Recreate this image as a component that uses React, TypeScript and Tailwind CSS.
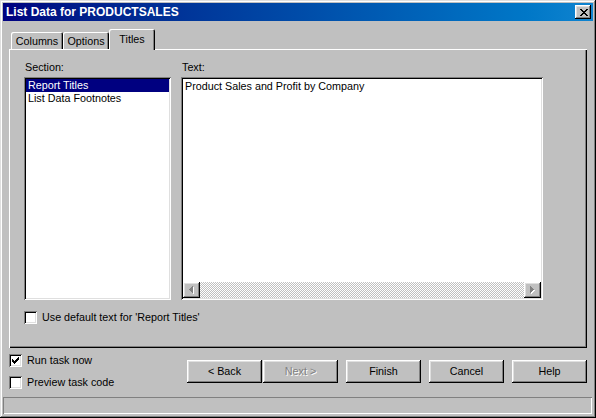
import React from 'react';

const raised =
  'shadow-[inset_-1px_-1px_#000,inset_1px_1px_#fff,inset_-2px_-2px_#808080,inset_2px_2px_#dfdfdf]';
const sunken =
  'shadow-[inset_1px_1px_#808080,inset_-1px_-1px_#fff,inset_2px_2px_#000,inset_-2px_-2px_#dfdfdf]';

const CloseGlyph = () => (
  <svg width="8" height="7" viewBox="0 0 8 7" shapeRendering="crispEdges">
    <path
      d="M0 0h2v1H0zM6 0h2v1H6zM1 1h2v1H1zM5 1h2v1H5zM2 2h4v1H2zM3 3h2v1H3zM2 4h4v1H2zM1 5h2v1H1zM5 5h2v1H5zM0 6h2v1H0zM6 6h2v1H6z"
      fill="#000"
    />
  </svg>
);

const CheckGlyph = () => (
  <svg width="7" height="7" viewBox="0 0 7 7" shapeRendering="crispEdges">
    <path
      d="M6 0h1v1H6zM5 1h2v1H5zM0 2h1v1H0zM4 2h3v1H4zM0 3h2v1H0zM3 3h3v1H3zM0 4h5v1H0zM1 5h3v1H1zM2 6h1v1H2z"
      fill="#000"
    />
  </svg>
);

const Checkbox: React.FC<{ checked?: boolean }> = ({ checked }) => (
  <div className={`w-[13px] h-[13px] bg-white flex items-center justify-center shrink-0 ${sunken}`}>
    {checked && <CheckGlyph />}
  </div>
);

const ScrollButton: React.FC<{ dir: 'left' | 'right' }> = ({ dir }) => (
  <div className={`w-[17px] h-[16px] bg-[#c0c0c0] flex items-center justify-center shrink-0 ${raised}`}>
    <svg width="5" height="8" viewBox="0 0 5 8" shapeRendering="crispEdges">
      {dir === 'left' ? (
        <>
          <path d="M3 0h1v7H3zM2 1h1v5H2zM1 2h1v3H1zM0 3h1v1H0z" fill="#fff" transform="translate(1,1)" />
          <path d="M3 0h1v7H3zM2 1h1v5H2zM1 2h1v3H1zM0 3h1v1H0z" fill="#808080" />
        </>
      ) : (
        <>
          <path d="M0 0h1v7H0zM1 1h1v5H1zM2 2h1v3H2zM3 3h1v1H3z" fill="#fff" transform="translate(1,1)" />
          <path d="M0 0h1v7H0zM1 1h1v5H1zM2 2h1v3H2zM3 3h1v1H3z" fill="#808080" />
        </>
      )}
    </svg>
  </div>
);

const Tab: React.FC<{ label: string; width: string; active?: boolean }> = ({ label, width, active }) => (
  <div
    className={`${width} bg-[#c0c0c0] rounded-t-[2px] flex justify-center shadow-[inset_1px_1px_#fff,inset_-1px_0_#000,inset_-2px_0_#808080] ${
      active ? 'h-[21px] relative top-[1px] z-10 pt-[4px]' : 'h-[17px] pt-[3px]'
    }`}
  >
    <span className="leading-[12px]">{label}</span>
  </div>
);

const Button: React.FC<{ label: string; disabled?: boolean; className?: string }> = ({ label, disabled, className }) => (
  <div className={`w-[75px] h-[23px] bg-[#c0c0c0] flex items-center justify-center ${raised} ${className ?? ''}`}>
    <span className={disabled ? 'text-[#808080] [text-shadow:1px_1px_0_#fff]' : ''}>{label}</span>
  </div>
);

export default function App() {
  return (
    <div className="w-[596px] h-[418px] bg-[#c0c0c0] flex flex-col pt-[3px] px-[3px] pb-[4px] font-['Liberation_Sans',Arial,sans-serif] text-[10.75px] text-black select-none shadow-[inset_-1px_-1px_#000,inset_1px_1px_#dfdfdf,inset_-2px_-2px_#808080,inset_2px_2px_#fff]">
      {/* title bar */}
      <div className="h-[18px] flex items-center justify-between pl-[3px] pr-[2px] bg-gradient-to-r from-[#000080] to-[#1084d0] shrink-0">
        <span className="text-white font-bold text-[12px] leading-[14px]">List Data for PRODUCTSALES</span>
        <div className={`w-[16px] h-[14px] bg-[#c0c0c0] flex items-center justify-center pl-[1px] ${raised}`}>
          <CloseGlyph />
        </div>
      </div>

      {/* tabs */}
      <div className="h-[20px] mt-[8px] pl-[8px] flex items-end shrink-0">
        <Tab label="Columns" width="w-[52px]" />
        <Tab label="Options" width="w-[46px]" />
        <Tab label="Titles" width="w-[46px]" active />
      </div>

      {/* tab panel */}
      <div className="ml-[6px] w-[578px] h-[299px] shrink-0 flex flex-col pt-[12px] px-[15px] shadow-[inset_1px_1px_#fff,inset_-1px_-1px_#000,inset_-2px_-2px_#808080]">
        <div className="flex">
          <div className="w-[147px] flex flex-col">
            <div className="h-[16px] leading-[13px] pl-[1px]">Section:</div>
            <div className={`h-[223px] bg-white p-[2px] ${sunken}`}>
              <div className="h-[13px] leading-[13px] pl-[2px] bg-[#000080] text-white">Report Titles</div>
              <div className="h-[13px] leading-[13px] pl-[2px]">List Data Footnotes</div>
            </div>
          </div>
          <div className="w-[362px] ml-[10px] flex flex-col">
            <div className="h-[16px] leading-[13px] pl-[1px]">Text:</div>
            <div className={`h-[223px] bg-white p-[2px] flex flex-col ${sunken}`}>
              <div className="flex-1 pl-[2px] pt-[1px] leading-[13px]">Product Sales and Profit by Company</div>
              <div className="h-[16px] flex">
                <ScrollButton dir="left" />
                <div className="flex-1 bg-[repeating-conic-gradient(#c0c0c0_0_25%,#fff_0_50%)] bg-size-[2px_2px]" />
                <ScrollButton dir="right" />
              </div>
            </div>
          </div>
        </div>
        <div className="mt-[11px] flex items-center gap-[5px]">
          <Checkbox />
          <span className="leading-[13px]">Use default text for 'Report Titles'</span>
        </div>
      </div>

      {/* bottom area */}
      <div className="h-[49px] flex shrink-0">
        <div className="w-[184px] pl-[6px] pt-[6px] flex flex-col">
          <div className="h-[22px] flex items-start gap-[5px]">
            <Checkbox checked />
            <span className="leading-[13px]">Run task now</span>
          </div>
          <div className="h-[22px] flex items-start gap-[5px]">
            <Checkbox />
            <span className="leading-[13px]">Preview task code</span>
          </div>
        </div>
        <div className="pt-[12px] flex">
          <Button label="< Back" />
          <Button label="Next >" disabled className="ml-[1px]" />
          <Button label="Finish" className="ml-[8px]" />
          <Button label="Cancel" className="ml-[8px]" />
          <Button label="Help" className="ml-[8px]" />
        </div>
      </div>

      {/* status bar */}
      <div className="h-[17px] mr-[1px] shrink-0 shadow-[inset_1px_1px_#808080,inset_-1px_-1px_#fff]" />
    </div>
  );
}
